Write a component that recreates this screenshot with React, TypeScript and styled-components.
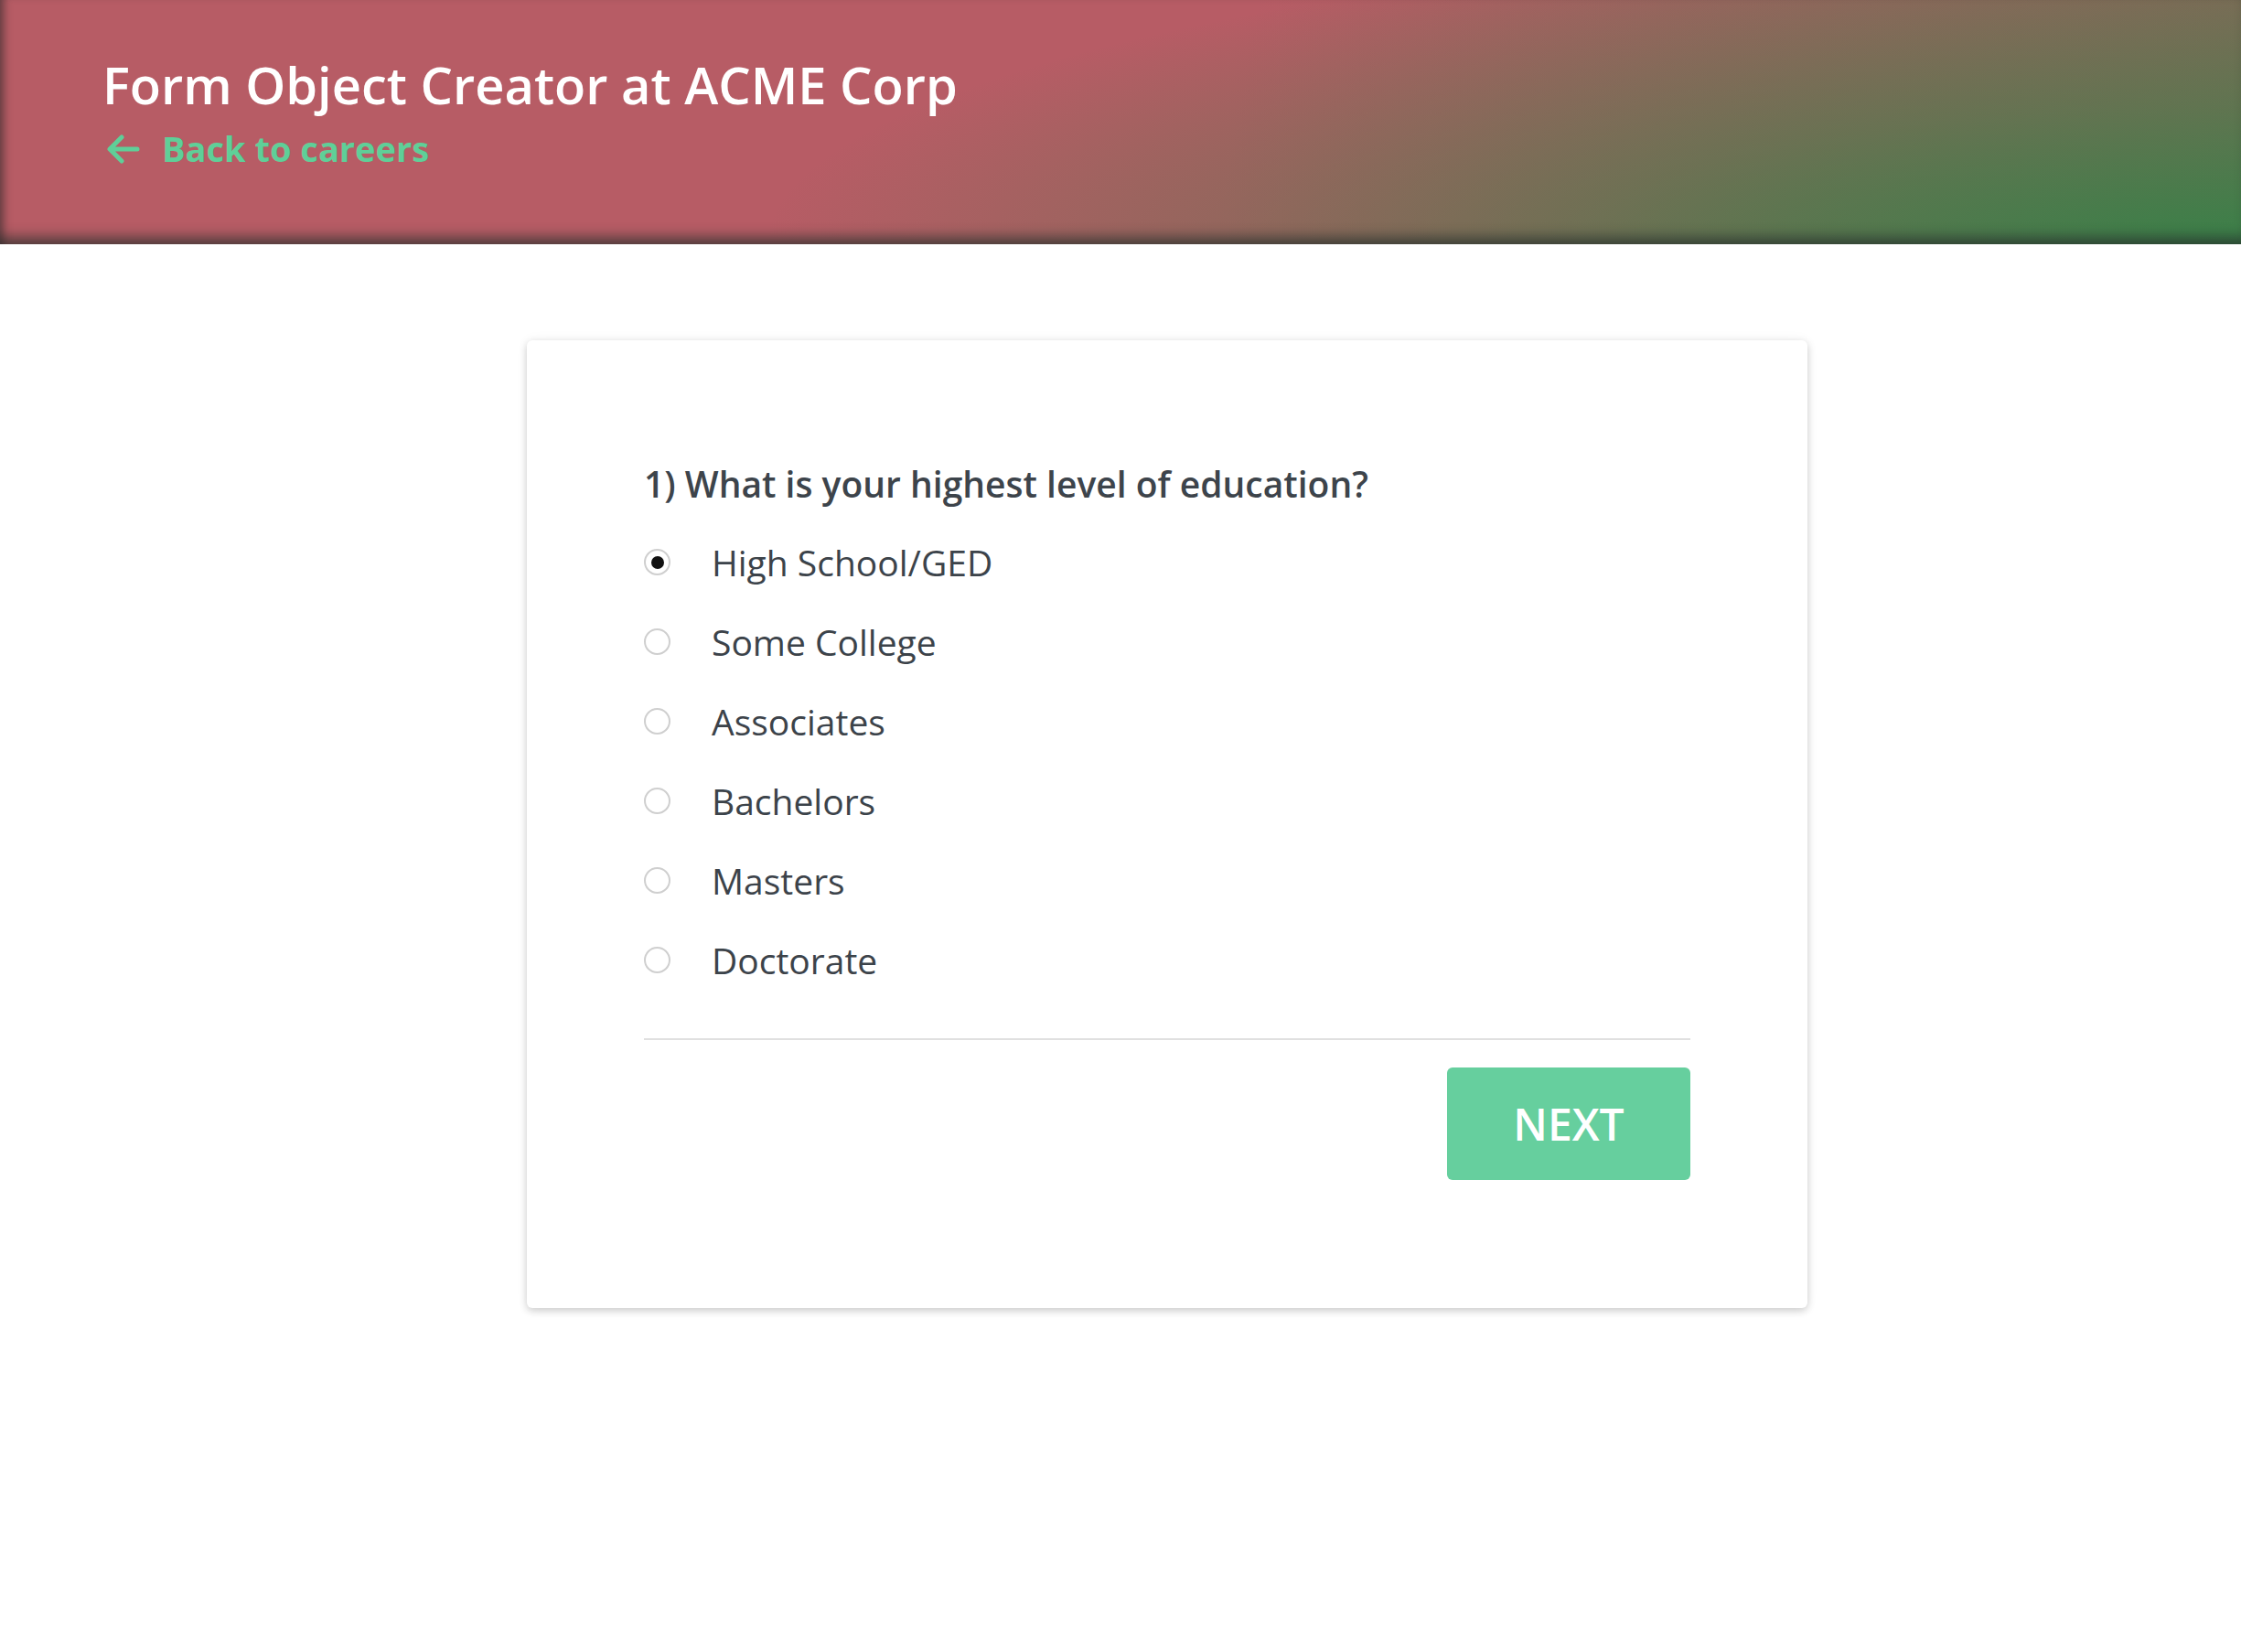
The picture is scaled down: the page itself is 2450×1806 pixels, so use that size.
import React, { useState } from "react";
import styled, { createGlobalStyle } from "styled-components";

const GlobalStyle = createGlobalStyle`
  html, body {
    margin: 0;
    padding: 0;
    background: #ffffff;
    font-family: "Open Sans", "Noto Sans", sans-serif;
  }
  * { box-sizing: border-box; }
`;

const Header = styled.header`
  height: 267px;
  padding: 59px 0 0 112px;
  background:
    radial-gradient(ellipse 1900px 400px at 100% 100%, rgba(58, 128, 72, 1) 0%, rgba(58, 128, 72, 0.5) 38%, rgba(58, 128, 72, 0) 85%),
    linear-gradient(100deg, rgba(120, 108, 85, 0) 55%, rgba(120, 108, 85, 0.8) 100%),
    #b75c65;
  box-shadow: inset 10px 0 10px -6px rgba(40, 40, 40, 0.55), inset 0 -16px 14px -8px rgba(40, 50, 45, 0.7);
`;

const Title = styled.h1`
  margin: 0;
  font-size: 56px;
  line-height: 67px;
  font-weight: 600;
  color: #ffffff;
`;

const BackLink = styled.a`
  display: inline-flex;
  align-items: center;
  gap: 24px;
  margin-top: 15px;
  margin-left: 5px;
  font-size: 38px;
  line-height: 43px;
  font-weight: 700;
  color: #5fcf98;
  text-decoration: none;
`;

const Main = styled.main`
  padding: 105px 0 60px 576px;
`;

const Card = styled.section`
  width: 1400px;
  padding: 132px 128px 140px;
  background: #ffffff;
  border-radius: 6px;
  box-shadow: 0 3px 9px rgba(0, 0, 0, 0.18), 0 0 14px rgba(0, 0, 0, 0.05);
`;

const Question = styled.h2`
  margin: 0 0 18px;
  font-size: 39px;
  line-height: 49px;
  font-weight: 600;
  color: #3d444b;
`;

const Options = styled.div`
  display: flex;
  flex-direction: column;
`;

const OptionRow = styled.label`
  display: flex;
  align-items: center;
  height: 87px;
  gap: 45px;
  cursor: pointer;
`;

const RadioCircle = styled.span<{ $checked: boolean }>`
  width: 29px;
  height: 29px;
  flex: none;
  border-radius: 50%;
  border: 2px solid #cfcfcf;
  background: #ffffff;
  display: flex;
  align-items: center;
  justify-content: center;
  &::after {
    content: "";
    width: 14px;
    height: 14px;
    border-radius: 50%;
    background: #111111;
    display: ${(p) => (p.$checked ? "block" : "none")};
  }
`;

const OptionText = styled.span`
  font-size: 39px;
  line-height: 53px;
  font-weight: 400;
  color: #3c434a;
`;

const Divider = styled.hr`
  margin: 42px 0 30px;
  border: none;
  height: 2px;
  background: #e0e0e0;
`;

const Footer = styled.div`
  display: flex;
  justify-content: flex-end;
`;

const NextButton = styled.button`
  width: 266px;
  height: 123px;
  border: none;
  border-radius: 6px;
  background: #66cf9e;
  color: #ffffff;
  font-family: "Open Sans", "Noto Sans", sans-serif;
  font-size: 48px;
  font-weight: 600;
  cursor: pointer;
`;

const ArrowIcon = () => (
  <svg width="36" height="32" viewBox="0 0 36 32" fill="none">
    <path
      d="M33 16H4M16 3L3 16L16 29"
      stroke="currentColor"
      strokeWidth="5"
      strokeLinecap="round"
      strokeLinejoin="round"
    />
  </svg>
);

const OPTIONS = ["High School/GED", "Some College", "Associates", "Bachelors", "Masters", "Doctorate"];

export default function App() {
  const [selected, setSelected] = useState(0);
  return (
    <>
      <GlobalStyle />
      <Header>
        <Title>Form Object Creator at ACME Corp</Title>
        <BackLink href="#">
          <ArrowIcon />
          Back to careers
        </BackLink>
      </Header>
      <Main>
        <Card>
          <Question>1) What is your highest level of education?</Question>
          <Options>
            {OPTIONS.map((o, i) => (
              <OptionRow key={o} onClick={() => setSelected(i)}>
                <RadioCircle $checked={selected === i} />
                <OptionText>{o}</OptionText>
              </OptionRow>
            ))}
          </Options>
          <Divider />
          <Footer>
            <NextButton>NEXT</NextButton>
          </Footer>
        </Card>
      </Main>
    </>
  );
}
